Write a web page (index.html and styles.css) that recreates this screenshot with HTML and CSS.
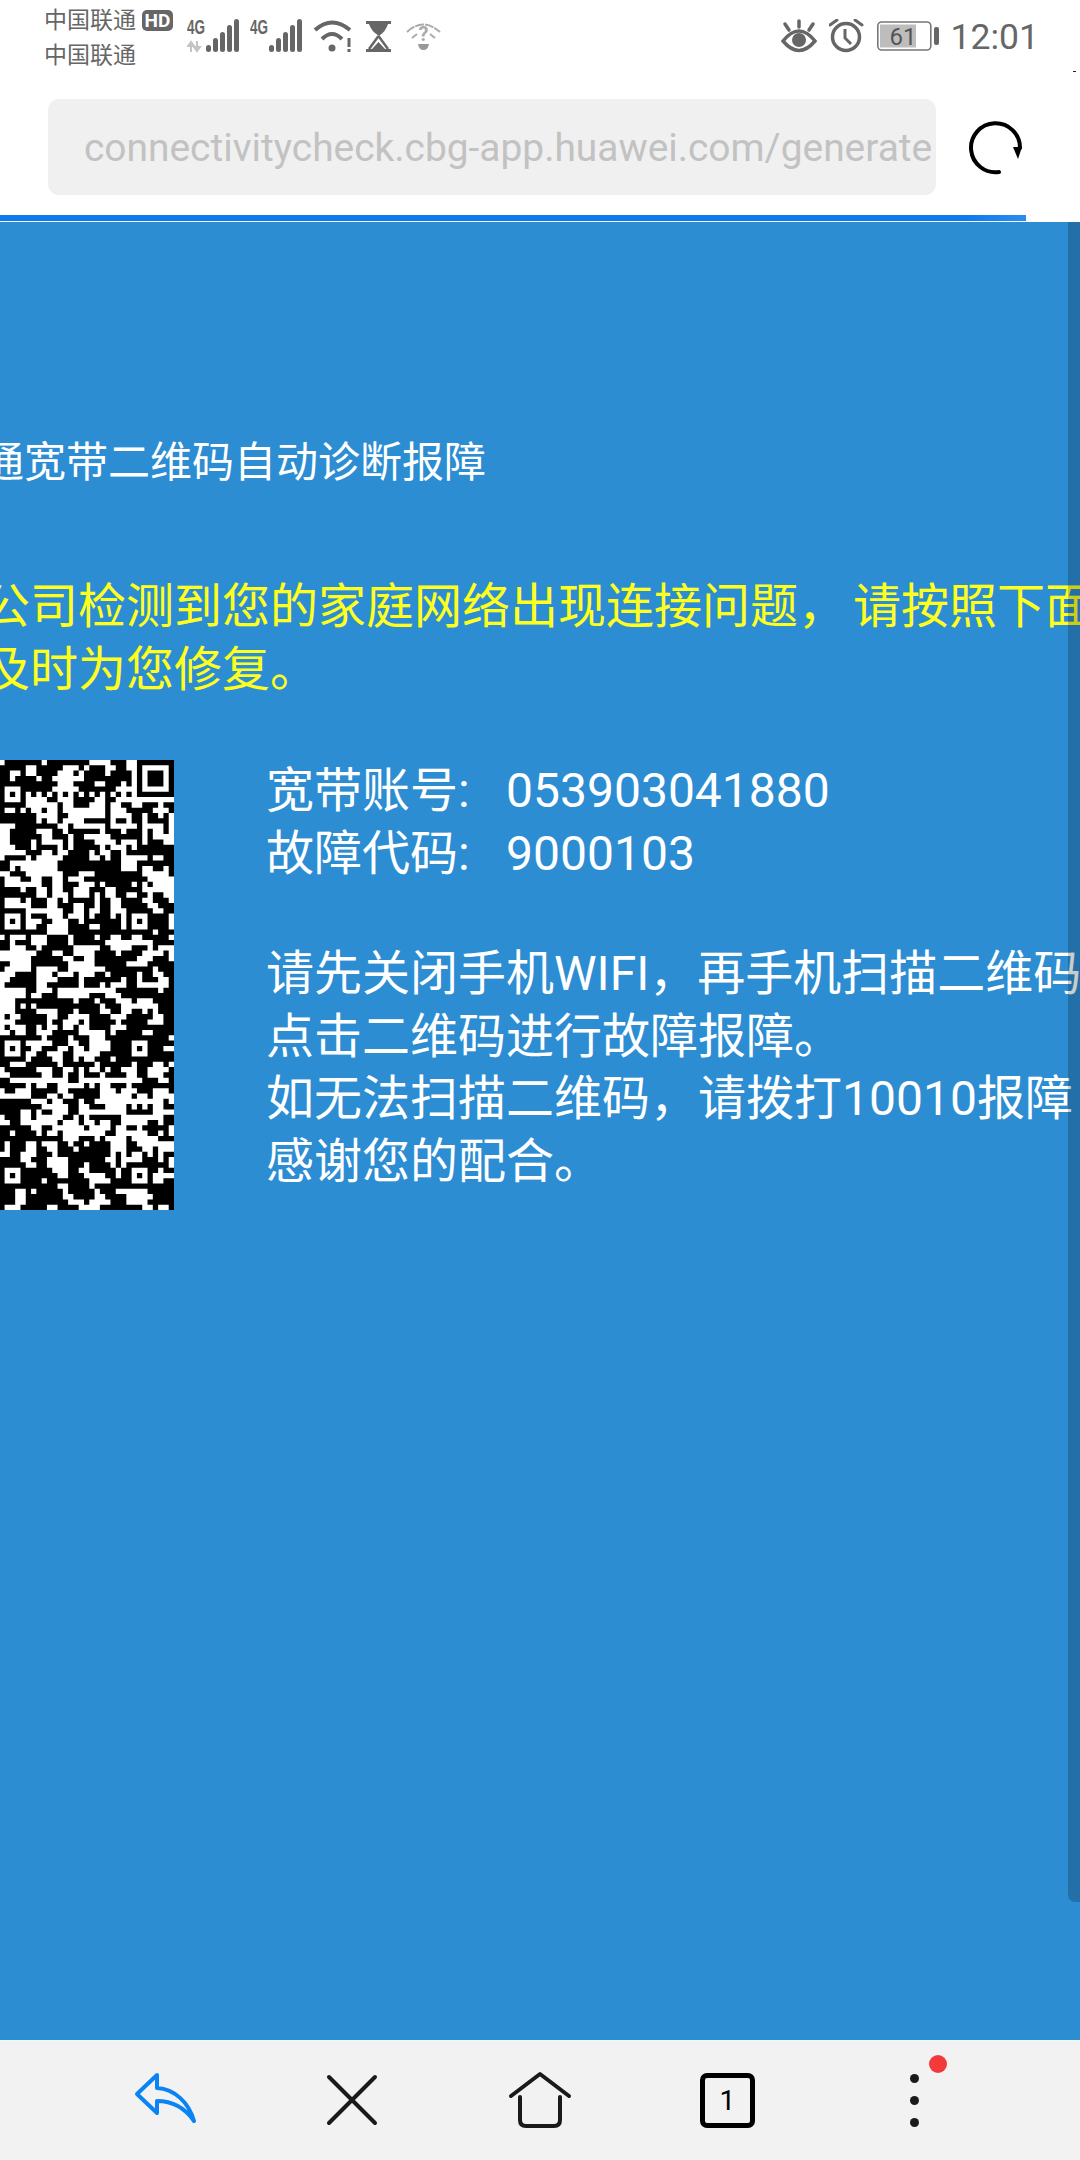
FILE: index.html
```html
<!DOCTYPE html>
<html lang="zh-CN">
<head>
    <meta charset="UTF-8">
    <title>宽带二维码自动诊断报障</title>
    <link rel="stylesheet" href="styles.css">
</head>
<body>
<div id="phone">
    <div id="status-bar">
        <div class="carriers">
            <div class="carrier-line">中国联通<span class="hd">HD</span></div>
            <div class="carrier-line">中国联通</div>
        </div>
        <div class="status-icons">
            <svg width="53" height="34" viewBox="0 0 53 34">
                <text x="0" y="15" class="net" textLength="18" lengthAdjust="spacingAndGlyphs">4G</text>
                <path d="M4 33V23M4 23l-3 4h6zM10 22v10M10 32l3-4h-6z" stroke="#c4c4c4" stroke-width="2" fill="#c4c4c4"/>
                <g fill="#666">
                    <rect x="19" y="26" width="5" height="7" rx="2.5"/>
                    <rect x="26" y="19" width="5" height="14" rx="2.5"/>
                    <rect x="33" y="13" width="5" height="20" rx="2.5"/>
                    <rect x="40" y="6" width="5" height="27" rx="2.5"/>
                    <rect x="47" y="0" width="5" height="33" rx="2.5"/>
                </g>
            </svg>
            <svg width="53" height="34" viewBox="0 0 53 34">
                <text x="0" y="15" class="net" textLength="18" lengthAdjust="spacingAndGlyphs">4G</text>
                <g fill="#666">
                    <rect x="19" y="26" width="5" height="7" rx="2.5"/>
                    <rect x="26" y="19" width="5" height="14" rx="2.5"/>
                    <rect x="33" y="13" width="5" height="20" rx="2.5"/>
                    <rect x="40" y="6" width="5" height="27" rx="2.5"/>
                    <rect x="47" y="0" width="5" height="33" rx="2.5"/>
                </g>
            </svg>
            <svg width="43" height="34" viewBox="0 0 43 34">
                <g fill="none" stroke="#666" stroke-width="4">
                    <path d="M2 11Q19 -4 37 11"/>
                    <path d="M9 20Q19 10 29 20"/>
                </g>
                <circle cx="19" cy="29" r="3.5" fill="#666"/>
                <rect x="34.5" y="19" width="3" height="9" fill="#666"/>
                <rect x="34.5" y="30" width="3" height="3" fill="#666"/>
            </svg>
            <svg width="30" height="34" viewBox="0 0 30 34">
                <path d="M0 2H25V5H22Q20 12 13 17Q5 12 3 5H0z" fill="#666"/>
                <path d="M12.500 17L3 30M12.500 17L22 30" stroke="#666" stroke-width="2.500" fill="none"/>
                <path d="M12.500 23L19 30H6z" fill="#666"/>
                <rect x="0" y="30" width="25" height="3" fill="#666"/>
            </svg>
            <svg width="35" height="34" viewBox="0 0 35 34">
                <g fill="none" stroke="#aaa" stroke-width="2">
                    <path d="M1 13Q17 -2 34 13" stroke-dasharray="9 1"/>
                    <path d="M6 19L11 15M29 19L24 15"/>
                </g>
                <text x="17.500" y="22" class="ask">?</text>
                <path d="M12 25H23Q22 31 17.500 31Q13 31 12 25z" fill="#999"/>
            </svg>
        </div>
        <div class="status-right">
            <svg width="38" height="34" viewBox="0 0 38 34">
                <path d="M2 22Q18 2 34 22Q18 41 2 22z" fill="none" stroke="#666" stroke-width="3.500"/>
                <circle cx="18" cy="21" r="7" fill="#666"/>
                <path d="M18 2V8M4 5L8 11M32 5L28 11" stroke="#666" stroke-width="3.500" stroke-linecap="round"/>
            </svg>
            <svg width="38" height="34" viewBox="0 0 38 34">
                <circle cx="17" cy="18" r="13.500" fill="none" stroke="#666" stroke-width="3.500"/>
                <path d="M16 10V19L22 25" fill="none" stroke="#666" stroke-width="3"/>
                <path d="M1 6L8 1M33 6L26 1" stroke="#666" stroke-width="3" stroke-linecap="round"/>
            </svg>
            <svg width="64" height="34" viewBox="0 0 64 34">
                <rect x="0.800" y="3" width="53" height="28" rx="4" fill="none" stroke="#777" stroke-width="1.600"/>
                <rect x="3" y="5.500" width="36" height="23" fill="#bdbdbd"/>
                <rect x="57" y="8" width="5" height="18" rx="2" fill="#666"/>
                <text x="26" y="26" class="level">61</text>
            </svg>
            <span class="clock">12:01</span>
        </div>
        <i class="speck"></i>
    </div>

    <div id="url-row">
        <div class="url-box">connectivitycheck.cbg-app.huawei.com/generate</div>
        <svg class="reload" width="60" height="60" viewBox="0 0 60 60">
            <path d="M32 54A24.500 24.500 0 1 1 53 30" fill="none" stroke="#000" stroke-width="4" stroke-linecap="round"/>
            <path d="M46 29L55 29L51 41z" fill="#000"/>
        </svg>
    </div>

    <div id="progress"><div class="progress-fill"></div></div>

    <div id="page">
        <div class="content">
            <h1 class="title">通宽带二维码自动诊断报障</h1>
            <p class="notice">公司检测到您的家庭网络出现连接问题， 请按照下面<br>及时为您修复。</p>
            <div class="detail">
                <svg id="qr" width="450" height="450" viewBox="0 0 85 85"></svg>
                <div class="info">
                    <div>宽带账号<span class="colon">:</span>053903041880</div>
                    <div>故障代码<span class="colon">:</span>9000103</div>
                    <div class="blank"></div>
                    <div>请先关闭手机WIFI，再手机扫描二维码</div>
                    <div>点击二维码进行故障报障。</div>
                    <div>如无法扫描二维码，请拨打10010报障</div>
                    <div>感谢您的配合。</div>
                </div>
            </div>
        </div>
        <div class="scrollbar"></div>
    </div>

    <div id="toolbar">
        <div class="tool">
            <svg width="70" height="60" viewBox="0 0 70 60">
                <path d="M27 5L7 24L27 43V31C42 31 55 38 64 51C59 33 45 19 27 18z" fill="none" stroke="#0a84f5" stroke-width="4" stroke-linejoin="round"/>
            </svg>
        </div>
        <div class="tool">
            <svg width="60" height="60" viewBox="0 0 60 60">
                <path d="M7 7L53 53M53 7L7 53" stroke="#1a1a1a" stroke-width="4" stroke-linecap="round"/>
            </svg>
        </div>
        <div class="tool">
            <svg width="64" height="60" viewBox="0 0 64 60">
                <path d="M3 26L32 4L61 26" fill="none" stroke="#1a1a1a" stroke-width="4" stroke-linecap="round" stroke-linejoin="round"/>
                <path d="M12 27V50Q12 56 18 56H46Q52 56 52 50V27" fill="none" stroke="#1a1a1a" stroke-width="4" stroke-linecap="round"/>
            </svg>
        </div>
        <div class="tool">
            <div class="tab-count">1</div>
        </div>
        <div class="tool">
            <div class="dots"><i></i><i></i><i></i></div>
            <span class="badge"></span>
        </div>
    </div>
</div>
<script src="qr.js"></script>
</body>
</html>
```

FILE: styles.css
```css
*{
    margin: 0;
    padding: 0;
    box-sizing: border-box;
}
html, body{
    height: 100%;
}
body{
    background: #fff;
    font-family: Roboto, "Noto Sans CJK SC", sans-serif;
}
svg{
    display: block;
}
#phone{
    width: 1080px;
    height: 2160px;
    display: flex;
    flex-direction: column;
    overflow: hidden;
    position: relative;
}

/* status bar */
#status-bar{
    height: 99px;
    display: flex;
    align-items: flex-start;
    padding: 4px 41px 0 44px;
    color: #666;
}
.carriers{
    font-size: 23px;
    line-height: 34.5px;
}
.carrier-line{
    display: flex;
    align-items: center;
}
.hd{
    width: 31px;
    height: 21px;
    margin-left: 6px;
    margin-top: -1px;
    border-radius: 5px;
    background: #666;
    color: #fff;
    font-size: 19px;
    font-weight: 700;
    line-height: 21px;
    text-align: center;
}
.status-icons{
    display: flex;
    gap: 10px;
    margin: 15px 0 0 14px;
}
.status-right{
    display: flex;
    gap: 10px;
    margin: 15px 0 0 auto;
}
.net{
    font-family: "Liberation Sans", sans-serif;
    font-size: 20px;
    font-weight: 700;
    fill: #666;
}
.ask{
    font-family: Roboto, sans-serif;
    font-size: 20px;
    font-weight: 700;
    fill: #aaa;
    text-anchor: middle;
}
.level{
    font-family: Roboto, sans-serif;
    font-size: 24px;
    fill: #555;
    text-anchor: middle;
}
.clock{
    font-size: 35.5px;
    line-height: 36px;
    color: #666;
}
.speck{
    position: absolute;
    top: 71px;
    right: 4px;
    width: 3px;
    height: 1px;
    background: #222;
}

/* address bar */
#url-row{
    height: 116px;
    display: flex;
    align-items: flex-start;
    padding-left: 48px;
}
.url-box{
    width: 888px;
    height: 96px;
    padding-left: 36px;
    border-radius: 11px;
    background: #f0f0f0;
    color: #c2c2c2;
    font-size: 38.9px;
    line-height: 97px;
    white-space: nowrap;
    overflow: hidden;
}
.reload{
    margin: 19px 0 0 31px;
}
#progress{
    height: 7px;
    border-bottom: 1px solid #fff;
}
.progress-fill{
    width: 1026px;
    height: 6px;
    background: linear-gradient(to right, #0b7bef 94%, #2a8cf2);
}

/* page */
#page{
    flex: 1;
    position: relative;
    overflow: hidden;
    background: #2c8dd3;
}
.content{
    margin-left: -18px;
    white-space: nowrap;
}
.title{
    padding-top: 220px;
    color: #fff;
    font-size: 42px;
    font-weight: 400;
    line-height: 42px;
}
.notice{
    margin-top: 92px;
    color: #ffff1e;
    font-size: 48px;
    line-height: 62.5px;
    word-spacing: -5px;
}
.detail{
    display: flex;
    gap: 92px;
    margin-top: 59px;
}
#qr{
    flex: none;
    margin-left: -258px;
    background: #fff;
}
.info{
    color: #fff;
    font-size: 48px;
    line-height: 62.5px;
}
.colon{
    display: inline-block;
    width: 48px;
}
.blank{
    height: 58px;
}
.scrollbar{
    position: absolute;
    top: 0;
    right: 0;
    width: 12px;
    height: 1680px;
    border-bottom-left-radius: 7px;
    background: rgba(0, 0, 0, .2);
}

/* bottom toolbar */
#toolbar{
    height: 120px;
    display: grid;
    grid-template-columns: repeat(5, 187.5px);
    padding-left: 71px;
    background: #f2f2f2;
    border-top: 1px solid #e6fbff;
}
.tool{
    position: relative;
    display: flex;
    align-items: center;
    justify-content: center;
    height: 118px;
}
.tab-count{
    width: 55px;
    height: 55px;
    border: 5px solid #000;
    border-radius: 7px;
    color: #000;
    font-size: 28px;
    line-height: 45px;
    text-align: center;
}
.dots{
    display: flex;
    flex-direction: column;
    gap: 13px;
}
.dots i{
    display: block;
    width: 9px;
    height: 9px;
    border-radius: 50%;
    background: #1a1a1a;
}
.badge{
    position: absolute;
    top: 14px;
    left: 108px;
    width: 18px;
    height: 18px;
    border-radius: 50%;
    background: #f23a3a;
}
```

FILE: qr.js
```js
// draws the QR code: fixed patterns for a version 17 code (85 modules), filler for the data
var SIZE = 85;
var seed = 20190;
var grid = [];

function next(){
    seed = (seed * 1103515245 + 12345) % 2147483648;
    return (seed >> 12) % 100;
}

for(var r=0; r<SIZE; r++){
    grid[r] = [];
    for(var c=0; c<SIZE; c++){
        var pick = next();
        if(pick < 28 && c > 0){
            grid[r][c] = grid[r][c-1];//clump with the left module
        }else if(pick < 56 && r > 0){
            grid[r][c] = grid[r-1][c];//clump with the one above
        }else{
            grid[r][c] = next() < 52 ? 1 : 0;
        }
    }
}

function finder(top, left){
    for(var r=-1; r<8; r++){
        for(var c=-1; c<8; c++){
            var y = top + r, x = left + c;
            if(y < 0 || x < 0 || y >= SIZE || x >= SIZE) continue;
            var ring = r >= 0 && r <= 6 && c >= 0 && c <= 6 && (r == 0 || r == 6 || c == 0 || c == 6);
            var core = r >= 2 && r <= 4 && c >= 2 && c <= 4;
            grid[y][x] = ring || core ? 1 : 0;
        }
    }
}

function align(top, left){
    for(var r=-2; r<=2; r++){
        for(var c=-2; c<=2; c++){
            var edge = Math.max(Math.abs(r), Math.abs(c));
            grid[top + r][left + c] = edge == 1 ? 0 : 1;
        }
    }
}

for(var i=8; i<SIZE-8; i++){
    grid[6][i] = i % 2 == 0 ? 1 : 0;
    grid[i][6] = i % 2 == 0 ? 1 : 0;
}

finder(0, 0);
finder(0, 78);
finder(78, 0);

var spots = [6, 30, 54, 78];
for(var a=0; a<spots.length; a++){
    for(var b=0; b<spots.length; b++){
        var inCorner = (spots[a] == 6 && spots[b] == 6) || (spots[a] == 6 && spots[b] == 78) || (spots[a] == 78 && spots[b] == 6);
        if(!inCorner) align(spots[a], spots[b]);
    }
}

var d = "";
for(var y=0; y<SIZE; y++){
    for(var x=0; x<SIZE; x++){
        if(grid[y][x]) d += "M" + x + " " + y + "h1v1h-1z";
    }
}
var path = document.createElementNS("http://www.w3.org/2000/svg", "path");
path.setAttribute("d", d);
document.getElementById("qr").appendChild(path);
```
